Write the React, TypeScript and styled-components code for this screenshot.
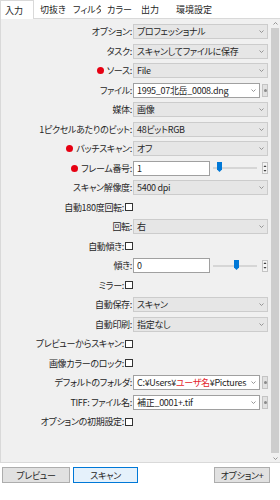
import styled, { createGlobalStyle } from "styled-components";

type Part = { text: string; red?: boolean };

type Field =
  | { kind: "select"; label: string; value: string; dot?: boolean }
  | { kind: "combo"; label: string; value: Part[] }
  | { kind: "check"; label: string }
  | { kind: "slider"; label: string; value: string; thumb: number; dot?: boolean };

const fields: Field[] = [
  { kind: "select", label: "オプション:", value: "プロフェッショナル" },
  { kind: "select", label: "タスク:", value: "スキャンしてファイルに保存" },
  { kind: "select", label: "ソース:", value: "File", dot: true },
  { kind: "combo", label: "ファイル:", value: [{ text: "1995_07北岳_0008.dng" }] },
  { kind: "select", label: "媒体:", value: "画像" },
  { kind: "select", label: "1ピクセルあたりのビット:", value: "48ビットRGB" },
  { kind: "select", label: "バッチスキャン:", value: "オフ", dot: true },
  { kind: "slider", label: "フレーム番号:", value: "1", thumb: 4, dot: true },
  { kind: "select", label: "スキャン解像度:", value: "5400 dpi" },
  { kind: "check", label: "自動180度回転:" },
  { kind: "select", label: "回転:", value: "右" },
  { kind: "check", label: "自動傾き:" },
  { kind: "slider", label: "傾き:", value: "0", thumb: 21 },
  { kind: "check", label: "ミラー:" },
  { kind: "select", label: "自動保存:", value: "スキャン" },
  { kind: "select", label: "自動印刷:", value: "指定なし" },
  { kind: "check", label: "プレビューからスキャン:" },
  { kind: "check", label: "画像カラーのロック:" },
  {
    kind: "combo",
    label: "デフォルトのフォルダ:",
    value: [{ text: "C:¥Users¥" }, { text: "ユーザ名", red: true }, { text: "¥Pictures" }],
  },
  { kind: "combo", label: "TIFF: ファイル名:", value: [{ text: "補正_0001+.tif" }] },
  { kind: "check", label: "オプションの初期設定:" },
];

const tabs = [
  { name: "入力", width: 34 },
  { name: "切抜き", width: 33 },
  { name: "フィルタ", width: 34 },
  { name: "カラー", width: 34 },
  { name: "出力", width: 35 },
  { name: "環境設定", width: 50 },
];

const Chevron = ({ up }: { up?: boolean }) => (
  <svg width="5" height="3" viewBox="0 0 5 3">
    <path
      d={up ? "M0.5 2.5 L2.5 0.5 L4.5 2.5" : "M0.5 0.5 L2.5 2.5 L4.5 0.5"}
      fill="none"
      stroke="#8a8a8a"
      strokeWidth="0.9"
    />
  </svg>
);

const SliderThumb = () => (
  <svg width="5" height="10" viewBox="0 0 5 10">
    <path d="M0 0 H5 V7.5 L2.5 10 L0 7.5 Z" fill="#0078d7" />
  </svg>
);

const SpinArrows = () => (
  <svg width="4" height="9" viewBox="0 0 4 9">
    <path d="M0.5 3 L2 1.2 L3.5 3 Z" fill="#333" />
    <path d="M0.5 6 L2 7.8 L3.5 6 Z" fill="#333" />
  </svg>
);

const App = () => {
  return (
    <Window>
      <GlobalStyle />
      <TabStrip>
        {tabs.map((t, i) => (
          <Tab key={t.name} $width={t.width} $active={i === 0}>
            {t.name}
          </Tab>
        ))}
      </TabStrip>
      <Panel>
        <Form>
          {fields.map((f) =>
            f.kind === "check" ? (
              <Label key={f.label} $wide>
                {f.label}
                <CheckBox />
              </Label>
            ) : (
              <Row key={f.label}>
                <Label>
                  {"dot" in f && f.dot && <Dot />}
                  {f.label}
                </Label>
                <Controls>
                  {f.kind === "select" && (
                    <Select>
                      <span>{f.value}</span>
                      <Chevron />
                    </Select>
                  )}
                  {f.kind === "combo" && (
                    <>
                      <Combo>
                        <span>
                          {f.value.map((p) => (
                            <Part key={p.text} $red={p.red}>
                              {p.text}
                            </Part>
                          ))}
                        </span>
                        <Chevron />
                      </Combo>
                      <SideButton>
                        <SideDot />
                      </SideButton>
                    </>
                  )}
                  {f.kind === "slider" && (
                    <>
                      <TextInput>{f.value}</TextInput>
                      <Slider>
                        <Track />
                        <Thumb style={{ left: f.thumb }}>
                          <SliderThumb />
                        </Thumb>
                      </Slider>
                      <Spin>
                        <SpinArrows />
                      </Spin>
                    </>
                  )}
                </Controls>
              </Row>
            )
          )}
        </Form>
        <ScrollBar>
          <Arrow>
            <Chevron up />
          </Arrow>
          <ScrollThumb />
          <Arrow>
            <Chevron />
          </Arrow>
        </ScrollBar>
      </Panel>
      <ButtonBar>
        <Button $width={68}>プレビュー</Button>
        <Button $width={65} $focused>
          スキャン
        </Button>
        <Button $width={56} $push>
          オプション+
        </Button>
      </ButtonBar>
    </Window>
  );
};

export default App;

const GlobalStyle = createGlobalStyle`
  html, body {
    margin: 0;
    padding: 0;
    background: #ffffff;
  }

  body {
    font-family: "Noto Sans CJK JP", "Noto Sans", sans-serif;
    font-feature-settings: "palt";
    font-size: 9px;
    letter-spacing: -0.3px;
    color: #262626;
  }
`;

const Window = styled.div`
  width: 280px;
  height: 500px;
  display: flex;
  flex-direction: column;
  background: #ffffff;
`;

const TabStrip = styled.div`
  height: 18px;
  display: flex;
  align-items: stretch;
  position: relative;
  z-index: 1;
`;

const Tab = styled.div<{ $width: number; $active?: boolean }>`
  width: ${(p) => p.$width}px;
  box-sizing: border-box;
  display: flex;
  align-items: center;
  padding-left: ${(p) => (p.$active ? "4px" : "5px")};
  font-size: 9px;
  letter-spacing: 0;
  white-space: nowrap;
  background: #ffffff;
  border: 1px solid ${(p) => (p.$active ? "#d9d9d9" : "transparent")};
  border-bottom: none;
  height: ${(p) => (p.$active ? "19px" : "18px")};
  line-height: 1;
`;

const Panel = styled.div`
  height: 445px;
  box-sizing: border-box;
  display: flex;
  background: #f0f0f0;
  border: 1px solid #d9d9d9;
  border-right: none;
`;

const Form = styled.div`
  flex: 1;
  display: flex;
  flex-direction: column;
  padding: 3px 2px 0 0;
`;

const Row = styled.div`
  height: 19.5px;
  display: grid;
  grid-template-columns: 131px 1fr;
  column-gap: 1px;
  align-items: center;
`;

const Label = styled.div<{ $wide?: boolean }>`
  display: flex;
  align-items: center;
  justify-content: flex-end;
  white-space: nowrap;
  height: 19.5px;
  width: ${(p) => (p.$wide ? "132px" : "auto")};
`;

const Dot = styled.span`
  width: 7px;
  height: 7px;
  border-radius: 50%;
  background: #e60012;
  margin-right: 3px;
`;

const CheckBox = styled.span`
  width: 6px;
  height: 6px;
  margin-left: 1px;
  border: 1px solid #333333;
  background: #ffffff;
`;

const Controls = styled.div`
  display: flex;
  align-items: center;
  gap: 2px;
  height: 15px;
`;

const Select = styled.div`
  flex: 1;
  height: 15px;
  box-sizing: border-box;
  display: flex;
  align-items: center;
  justify-content: space-between;
  padding: 0 3px 0 3px;
  background: #e6e6e6;
  border: 1px solid #cccccc;
  white-space: nowrap;
`;

const Combo = styled(Select)`
  background: #ffffff;
  border-color: #a0a0a0;
`;

const Part = styled.span<{ $red?: boolean }>`
  color: ${(p) => (p.$red ? "#e3242b" : "inherit")};
`;

const SideButton = styled.div`
  width: 6px;
  height: 13px;
  box-sizing: border-box;
  display: flex;
  align-items: center;
  justify-content: center;
  background: #e1e1e1;
  border: 1px solid #c4c4c4;
`;

const SideDot = styled.span`
  width: 3px;
  height: 3px;
  border-radius: 50%;
  background: #8a8a8a;
`;

const TextInput = styled.div`
  width: 77px;
  height: 15px;
  box-sizing: border-box;
  display: flex;
  align-items: center;
  padding: 0 3px;
  background: #ffffff;
  border: 1px solid #a0a0a0;
`;

const Slider = styled.div`
  flex: 1;
  height: 12px;
  margin: 0 3px 0 1px;
  position: relative;
  display: flex;
  align-items: center;
`;

const Track = styled.div`
  flex: 1;
  height: 2px;
  background: #d6d6d6;
`;

const Thumb = styled.div`
  position: absolute;
  top: 0;
  width: 5px;
  height: 10px;
  display: flex;
`;

const Spin = styled.div`
  width: 6px;
  height: 12px;
  box-sizing: border-box;
  display: flex;
  align-items: center;
  justify-content: center;
  background: #f4f4f4;
  border: 1px solid #c4c4c4;
`;

const ScrollBar = styled.div`
  width: 10px;
  display: flex;
  flex-direction: column;
  align-items: center;
  background: #f0f0f0;
`;

const Arrow = styled.div`
  height: 8px;
  display: flex;
  align-items: center;
  justify-content: center;
`;

const ScrollThumb = styled.div`
  flex: 1;
  width: 8px;
  margin: 1px 0;
  background: #cdcdcd;
`;

const ButtonBar = styled.div`
  display: flex;
  align-items: center;
  gap: 3px;
  padding: 4px 10px 0 2px;
`;

const Button = styled.div<{ $width: number; $focused?: boolean; $push?: boolean }>`
  width: ${(p) => p.$width}px;
  height: 16px;
  box-sizing: border-box;
  display: flex;
  align-items: center;
  justify-content: center;
  margin-left: ${(p) => (p.$push ? "auto" : "0")};
  font-size: 9px;
  background: ${(p) => (p.$focused ? "#e5f1fb" : "#e1e1e1")};
  border: 1px solid ${(p) => (p.$focused ? "#0078d7" : "#adadad")};
`;
